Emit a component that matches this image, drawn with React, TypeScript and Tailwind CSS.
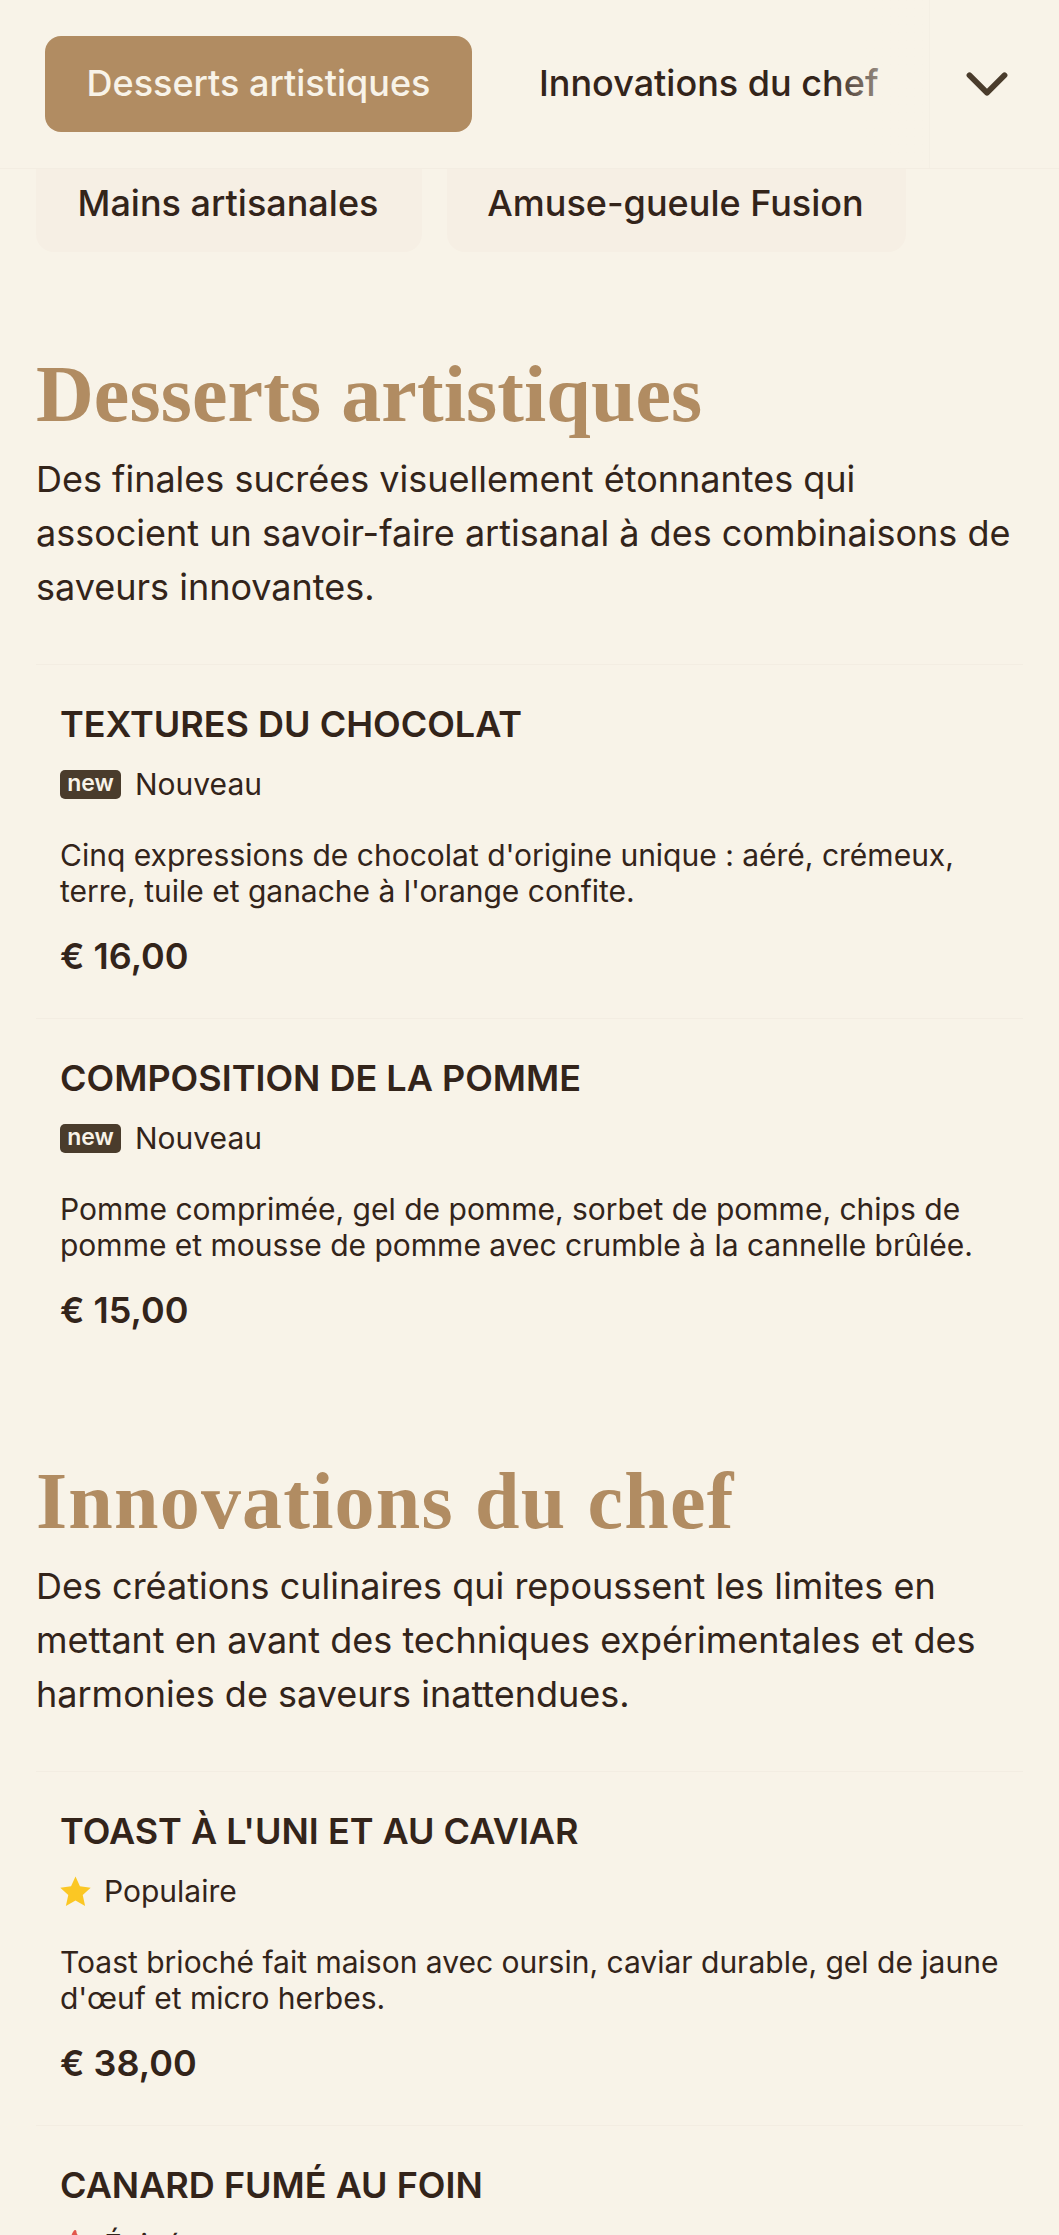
import React from 'react';
import { ChevronDown } from 'lucide-react';
import { FaFire } from 'react-icons/fa';

const inter = { fontFamily: 'Inter, sans-serif' };

interface Dish {
  name: string;
  tag: 'new' | 'popular' | 'spicy';
  desc: string;
  price?: string;
}

function DishTag({ tag }: { tag: Dish['tag'] }) {
  if (tag === 'new') {
    return (
      <div className="flex items-center gap-[14px] h-[36px]">
        <span className="flex items-center justify-center w-[61px] h-[29px] mt-[1px] rounded-[5px] bg-[#4a3c2c] text-[#f8f3e8] text-[23px] font-semibold leading-none pb-[3px]">new</span>
        <span className="text-[30px]">Nouveau</span>
      </div>
    );
  }
  if (tag === 'spicy') {
    return (
      <div className="flex items-center gap-[14px] h-[36px]">
        <FaFire className="w-[30px] h-[30px] text-[#e2574c]" />
        <span className="text-[30px]">Épicé</span>
      </div>
    );
  }
  return (
    <div className="flex items-center gap-[13px] h-[36px]">
      <svg viewBox="0 0 30 30" className="w-[31px] h-[31px] fill-[#fbc724]">
        <polygon points="15,0.5 19.3,10 29.7,11.3 22,18.3 24.3,29 15,23.7 5.7,29 8,18.3 0.3,11.3 10.7,10" />
      </svg>
      <span className="text-[30px]">Populaire</span>
    </div>
  );
}

function DishRow({ dish }: { dish: Dish }) {
  return (
    <div className="border-t border-[#f3ede2] pt-[37px] px-[24px] h-[354px]">
      <h3 className="text-[36px] leading-[44px] font-semibold">{dish.name}</h3>
      <div className="mt-[20px]"><DishTag tag={dish.tag} /></div>
      <p className="mt-[35px] text-[30px] leading-[36px]">{dish.desc}</p>
      <p className="mt-[25px] text-[36px] leading-[44px] font-semibold">{dish.price}</p>
    </div>
  );
}

function MenuSection({ title, titleClass, intro, dishes }: { title: string; titleClass: string; intro: string; dishes: Dish[] }) {
  return (
    <section>
      <h2 className={`text-[80px] leading-[96px] font-bold text-[#b18c62] ${titleClass}`} style={{ fontFamily: '"Liberation Serif", serif' }}>{title}</h2>
      <p className="mt-[10px] text-[36px] leading-[54px]">{intro}</p>
      <div className="mt-[50px]">
        {dishes.map((d) => <DishRow key={d.name} dish={d} />)}
      </div>
    </section>
  );
}

export default function App() {
  return (
    <div className="h-[2235px] overflow-hidden bg-[#f8f3e8] text-[#33241a]" style={inter}>
      {/* Sticky tabs */}
      <div className="flex h-[169px] border-b border-[#f3ede2]">
        <div className="relative flex-1 flex items-center gap-[67px] pl-[45px] overflow-hidden border-r border-[#f4efe4]">
          <button className="shrink-0 w-[427px] h-[96px] pb-[2px] rounded-[16px] bg-[#b18c62] text-[#f8f3e8] text-[36px] font-medium">Desserts artistiques</button>
          <span className="pb-[2px] text-[36px] font-medium whitespace-nowrap">Innovations du chef</span>
          <div className="absolute inset-y-0 right-0 w-[100px] bg-gradient-to-r from-transparent to-[#f8f3e8]" />
        </div>
        <div className="w-[129px] pr-[16px] flex items-center justify-center">
          <ChevronDown className="shrink-0 w-[70px] h-[70px] text-[#4a3c2c]" strokeWidth={2} />
        </div>
      </div>
      <div className="px-[36px]">
        <div className="flex gap-[25px]">
          <div className="w-[386px] h-[83px] pb-[16px] pr-[2px] flex items-center justify-center rounded-b-[18px] bg-[#f6efe4] text-[36px] font-medium">Mains artisanales</div>
          <div className="w-[459px] h-[83px] pb-[16px] pr-[2px] flex items-center justify-center rounded-b-[18px] bg-[#f6efe4] text-[36px] font-medium">Amuse-gueule Fusion</div>
        </div>
        <div className="mt-[94px]">
          <MenuSection
            title="Desserts artistiques"
            titleClass="tracking-[0.1px]"
            intro="Des finales sucrées visuellement étonnantes qui associent un savoir-faire artisanal à des combinaisons de saveurs innovantes."
            dishes={[
              { name: 'TEXTURES DU CHOCOLAT', tag: 'new', desc: "Cinq expressions de chocolat d'origine unique : aéré, crémeux, terre, tuile et ganache à l'orange confite.", price: '€ 16,00' },
              { name: 'COMPOSITION DE LA POMME', tag: 'new', desc: 'Pomme comprimée, gel de pomme, sorbet de pomme, chips de pomme et mousse de pomme avec crumble à la cannelle brûlée.', price: '€ 15,00' },
            ]}
          />
        </div>
        <div className="mt-[81px]">
          <MenuSection
            title="Innovations du chef"
            titleClass="tracking-[1.2px]"
            intro="Des créations culinaires qui repoussent les limites en mettant en avant des techniques expérimentales et des harmonies de saveurs inattendues."
            dishes={[
              { name: "TOAST À L'UNI ET AU CAVIAR", tag: 'popular', desc: "Toast brioché fait maison avec oursin, caviar durable, gel de jaune d'œuf et micro herbes.", price: '€ 38,00' },
              { name: 'CANARD FUMÉ AU FOIN', tag: 'spicy', desc: '', price: '' },
            ]}
          />
        </div>
      </div>
    </div>
  );
}
